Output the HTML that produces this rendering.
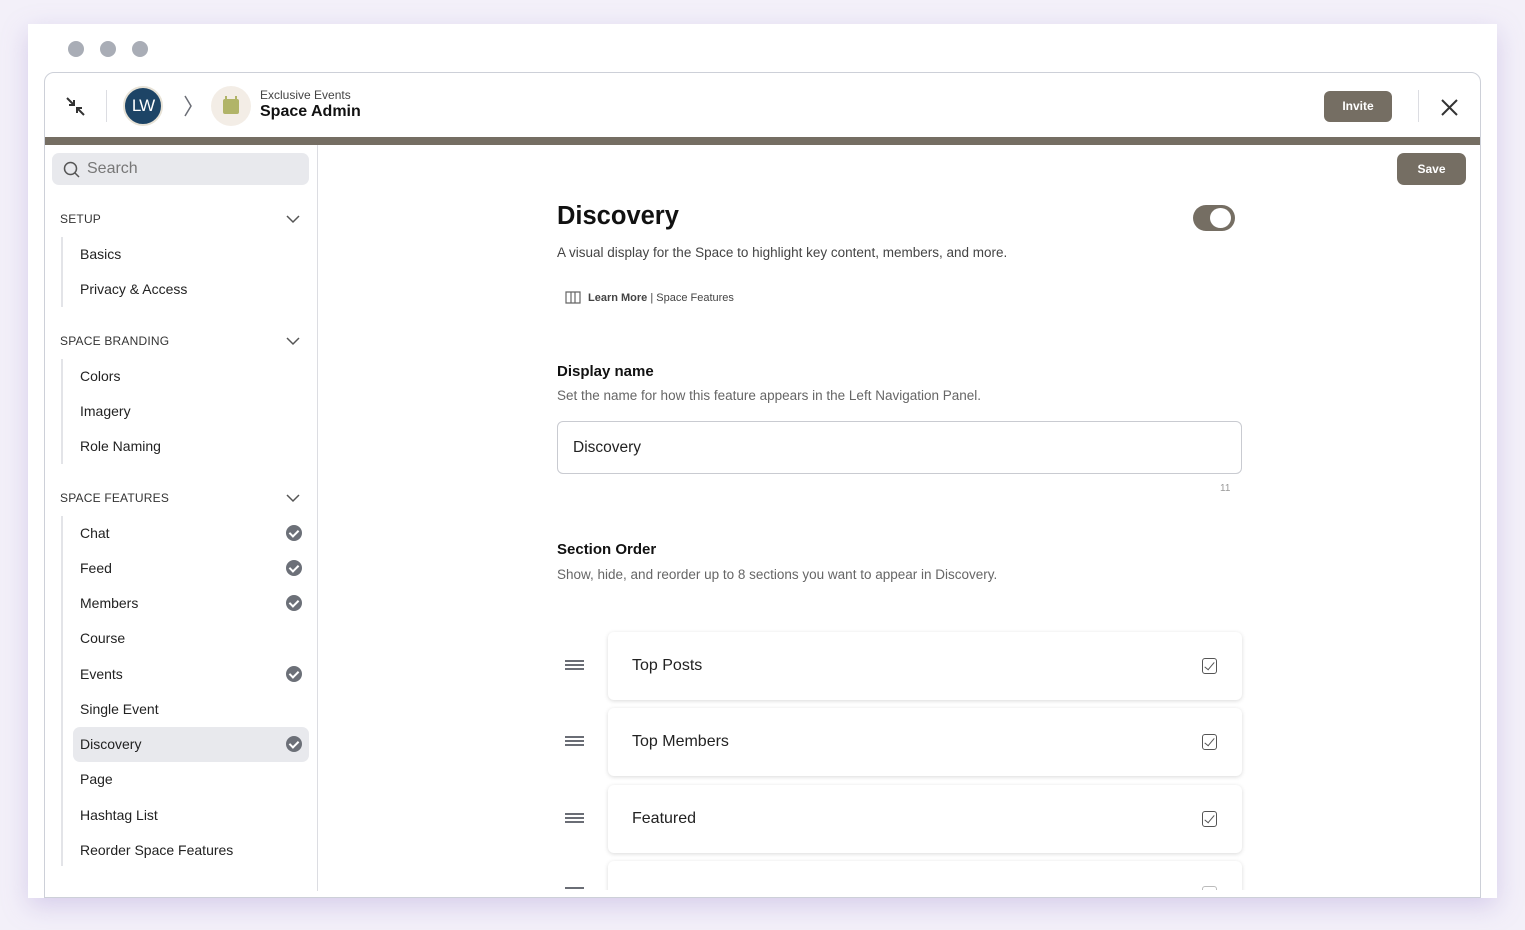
<!DOCTYPE html>
<html><head><meta charset="utf-8"><style>
*{box-sizing:border-box;margin:0;padding:0}
body{width:1525px;height:930px;background:#f3f0f9;font-family:"Liberation Sans",sans-serif;color:#222;position:relative;overflow:hidden}
.card{position:absolute;left:28px;top:24px;width:1469px;height:874px;background:#fff;box-shadow:0 8px 24px rgba(160,140,210,.35)}
.dot{position:absolute;top:41px;width:16px;height:16px;border-radius:50%;background:#a9adb6}
.win{position:absolute;left:44px;top:72px;width:1437px;height:826px;border:1px solid #cdd0d8;border-radius:10px 10px 0 0;background:#fff;overflow:hidden}
.a{position:absolute}
.bar{position:absolute;left:0;top:64px;width:100%;height:8px;background:#756e63}
.sh{position:absolute;left:15px;font-size:12px;color:#333;letter-spacing:.2px}
.chev{position:absolute;left:241px;width:14px;height:10px}
.it{position:absolute;left:35px;font-size:14px;color:#222}
.vl{position:absolute;left:16px;width:2px;background:#e3e4e8}
.ck{position:absolute;left:241px;width:16px;height:16px;border-radius:50%;background:#6c7078}
.ck:after{content:"";position:absolute;left:5px;top:3px;width:4px;height:7px;border:solid #fff;border-width:0 2px 2px 0;transform:rotate(45deg)}
.row{position:absolute;left:563px;width:634px;height:68px;border-radius:6px;background:#fff;box-shadow:0 1px 4px rgba(0,0,0,.15);}
.row span{position:absolute;left:24px;top:25px;font-size:16px;color:#222}
.cb{position:absolute;right:25px;top:26px;width:15px;height:16px;border:1.5px solid #555;border-radius:3px}
.cb:after{content:"";position:absolute;left:4px;top:1px;width:4px;height:9px;border:solid #555;border-width:0 1.3px 1.3px 0;transform:rotate(40deg)}
.hb{position:absolute;left:520px;width:19px;height:10px;border-top:2px solid #6a6d75;border-bottom:2px solid #6a6d75}
.hb:after{content:"";position:absolute;left:0;top:2px;width:19px;height:2px;background:#6a6d75}
</style></head><body>
<div class="card"></div>
<div class="dot" style="left:68px"></div><div class="dot" style="left:100px"></div><div class="dot" style="left:132px"></div>
<div class="win">
 <svg class="a" style="left:20px;top:23px" width="22" height="22" viewBox="0 0 22 22" fill="none" stroke="#333" stroke-width="2"><path d="M2 2l7 7M9 4v5H4"/><path d="M19 19l-7-7M12 17v-5h5"/></svg>
 <div class="a" style="left:61px;top:17px;width:1px;height:32px;background:#dcdde2"></div>
 <div class="a" style="left:78px;top:13px;width:40px;height:40px;border-radius:50%;background:#1d4466;border:2px solid #e7e2d6;color:#fff;font-size:17px;line-height:36px;text-align:center;letter-spacing:-1px">LW</div>
 <svg class="a" style="left:138px;top:22px" width="10" height="22" viewBox="0 0 10 22" fill="none" stroke="#6a6d75" stroke-width="1.5"><path d="M2 1l6 10-6 10"/></svg>
 <div class="a" style="left:166px;top:13px;width:40px;height:40px;border-radius:50%;background:#f3ede6"></div>
 <div class="a" style="left:178px;top:26px;width:16px;height:15px;background:#b1b468;border-radius:2px"></div>
 <div class="a" style="left:180px;top:23px;width:2px;height:4px;background:#b1b468"></div><div class="a" style="left:190px;top:23px;width:2px;height:4px;background:#b1b468"></div>
 <div class="a" style="left:215px;top:15px;font-size:12px;color:#444">Exclusive Events</div>
 <div class="a" style="left:215px;top:30px;font-size:16px;font-weight:bold;color:#111">Space Admin</div>
 <div class="a" style="left:1279px;top:18px;width:68px;height:31px;border-radius:6px;background:#756e63;color:#fff;font-size:12px;font-weight:bold;line-height:31px;text-align:center">Invite</div>
 <div class="a" style="left:1373px;top:17px;width:1px;height:32px;background:#dcdde2"></div>
 <svg class="a" style="left:1396px;top:26px" width="17" height="17" viewBox="0 0 17 17" stroke="#333" stroke-width="2"><path d="M1 1l15 15M16 1L1 16"/></svg>
 <div class="bar"></div>
 <div class="a" style="left:272px;top:72px;width:1px;height:746px;background:#dcdde2"></div>
 <div class="a" style="left:7px;top:80px;width:257px;height:32px;border-radius:7px;background:#e8e9ed"></div>
 <svg class="a" style="left:18px;top:88px" width="17" height="17" viewBox="0 0 17 17" fill="none" stroke="#555" stroke-width="1.5"><circle cx="7.5" cy="7.5" r="6"/><path d="M12 12l4 4"/></svg>
 <div class="a" style="left:42px;top:87px;font-size:16px;color:#777">Search</div>
 <div class="sh" style="top:139px">SETUP</div>
 <svg class="chev" style="top:141px" viewBox="0 0 14 10" fill="none" stroke="#555" stroke-width="1.5"><path d="M1 2l6 6 6-6"/></svg>
 <div class="vl" style="top:164px;height:70px"></div>
 <div class="it" style="top:173px">Basics</div><div class="it" style="top:208px">Privacy &amp; Access</div>
 <div class="sh" style="top:261px">SPACE BRANDING</div>
 <svg class="chev" style="top:263px" viewBox="0 0 14 10" fill="none" stroke="#555" stroke-width="1.5"><path d="M1 2l6 6 6-6"/></svg>
 <div class="vl" style="top:286px;height:105px"></div>
 <div class="it" style="top:295px">Colors</div><div class="it" style="top:330px">Imagery</div><div class="it" style="top:365px">Role Naming</div>
 <div class="sh" style="top:418px">SPACE FEATURES</div>
 <svg class="chev" style="top:420px" viewBox="0 0 14 10" fill="none" stroke="#555" stroke-width="1.5"><path d="M1 2l6 6 6-6"/></svg>
 <div class="vl" style="top:443px;height:350px"></div>
 <div class="a" style="left:28px;top:654px;width:236px;height:35px;border-radius:7px;background:#e8e9ed"></div>
 <div class="it" style="top:452px">Chat</div><div class="ck" style="top:452px"></div>
 <div class="it" style="top:487px">Feed</div><div class="ck" style="top:487px"></div>
 <div class="it" style="top:522px">Members</div><div class="ck" style="top:522px"></div>
 <div class="it" style="top:557px">Course</div>
 <div class="it" style="top:593px">Events</div><div class="ck" style="top:593px"></div>
 <div class="it" style="top:628px">Single Event</div>
 <div class="it" style="top:663px">Discovery</div><div class="ck" style="top:663px"></div>
 <div class="it" style="top:698px">Page</div>
 <div class="it" style="top:734px">Hashtag List</div>
 <div class="it" style="top:769px">Reorder Space Features</div>
 <div class="a" style="left:1352px;top:80px;width:69px;height:32px;border-radius:7px;background:#756e63;color:#fff;font-size:12px;font-weight:bold;line-height:32px;text-align:center">Save</div>
 <div class="a" style="left:512px;top:129px;font-size:25.5px;font-weight:bold;color:#111">Discovery</div>
 <div class="a" style="left:1148px;top:132px;width:42px;height:26px;border-radius:13px;background:#756e63"></div>
 <div class="a" style="left:1165px;top:135px;width:21px;height:20px;border-radius:50%;background:#fff"></div>
 <div class="a" style="left:512px;top:172px;font-size:13.5px;color:#444">A visual display for the Space to highlight key content, members, and more.</div>
 <svg class="a" style="left:520px;top:217px" width="16" height="14" viewBox="0 0 16 14" fill="none" stroke="#666" stroke-width="1.2"><path d="M1 2h5v11H1zM6 2h4v11H6zM10 2h5v11h-5z"/></svg>
 <div class="a" style="left:543px;top:219px;font-size:11px;color:#444"><b>Learn More</b> | Space Features</div>
 <div class="a" style="left:512px;top:290px;font-size:15px;font-weight:bold;color:#111">Display name</div>
 <div class="a" style="left:512px;top:315px;font-size:13.5px;color:#666">Set the name for how this feature appears in the Left Navigation Panel.</div>
 <div class="a" style="left:512px;top:348px;width:685px;height:53px;border:1px solid #c9cbd1;border-radius:6px"></div>
 <div class="a" style="left:528px;top:366px;font-size:15.5px;color:#222">Discovery</div>
 <div class="a" style="left:1175px;top:410px;font-size:10px;color:#999">11</div>
 <div class="a" style="left:512px;top:468px;font-size:15px;font-weight:bold;color:#111">Section Order</div>
 <div class="a" style="left:512px;top:494px;font-size:13.5px;color:#666">Show, hide, and reorder up to 8 sections you want to appear in Discovery.</div>
 <div class="hb" style="top:587px"></div><div class="row" style="top:559px"><span>Top Posts</span><div class="cb"></div></div>
 <div class="hb" style="top:663px"></div><div class="row" style="top:635px"><span>Top Members</span><div class="cb"></div></div>
 <div class="hb" style="top:740px"></div><div class="row" style="top:712px"><span>Featured</span><div class="cb"></div></div>
 <div class="hb" style="top:814px"></div>
 <div class="row" style="top:788px"><div class="cb" style="top:25px;border-color:#bbb"></div></div>
 <div class="a" style="left:273px;top:817px;width:1200px;height:20px;background:#fff"></div>
</div>
</body></html>
